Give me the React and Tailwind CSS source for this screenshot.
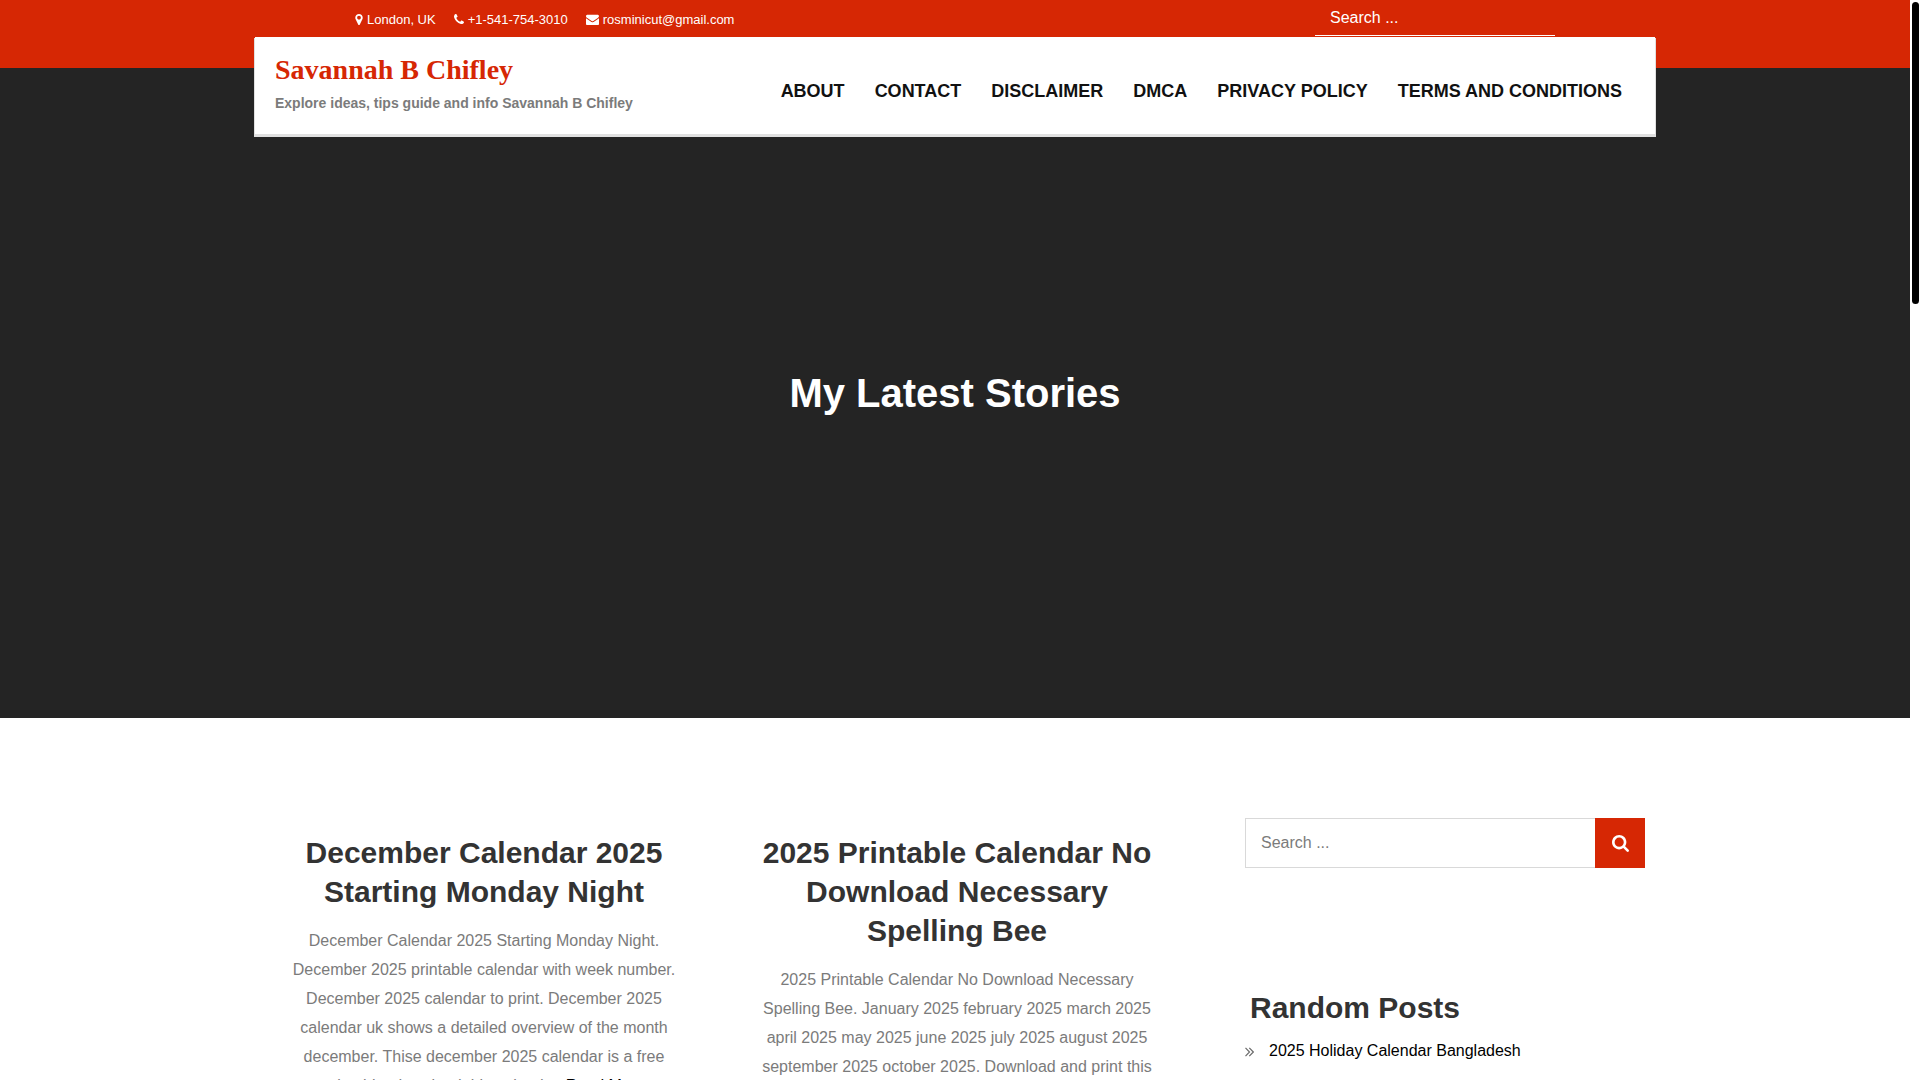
const navLinks = ['About', 'Contact', 'Disclaimer', 'DMCA', 'Privacy Policy', 'Terms and Conditions']

const contacts = [
  {
    label: 'London, UK',
    viewBox: '384 0 1024 1792',
    size: 'w-2',
    path: 'M1152 640q0-106-75-181t-181-75-181 75-75 181 75 181 181 75 181-75 75-181zm256 0q0 109-33 179l-364 774q-16 33-47.5 52t-67.5 19-67.5-19-46.5-52l-365-774q-33-70-33-179 0-212 150-362t362-150 362 150 150 362z',
  },
  {
    label: '+1-541-754-3010',
    href: 'tel:+15417543010',
    viewBox: '192 0 1408 1792',
    size: 'w-[10px]',
    path: 'M1600 1240q0 27-10 70.5t-21 68.5q-21 50-122 106-94 51-186 51-27 0-53-3.5t-57.5-12.5-47-14.5-55.5-20.5-49-18q-98-35-175-83-127-79-264-216t-216-264q-48-77-83-175-3-9-18-49t-20.5-55.5-14.5-47-12.5-57.5-3.5-53q0-92 51-186 56-101 106-122 25-11 68.5-21t70.5-10q14 0 21 3 18 6 53 76 11 19 30 54t35 63.5 31 53.5q3 4 17.5 25t21.5 35.5 7 28.5q0 20-28.5 50t-62 55-62 53-28.5 46q0 9 5 22.5t8.5 20.5 14 24 11.5 19q76 137 174 235t235 174q2 1 19 11.5t24 14 20.5 8.5 22.5 5q18 0 46-28.5t53-62 55-62 50-28.5q14 0 28.5 7t35.5 21.5 25 17.5q25 15 53.5 31t63.5 35 54 30q70 35 76 53 3 7 3 21z',
  },
  {
    label: 'rosminicut@gmail.com',
    href: 'mailto:rosminicut@gmail.com',
    viewBox: '0 0 1792 1792',
    size: 'w-[13px]',
    path: 'M1792 710v794q0 66-47 113t-113 47h-1472q-66 0-113-47t-47-113v-794q44 49 101 87 362 246 497 345 57 42 92.5 65.5t94.5 48 110 24.5h2q51 0 110-24.5t94.5-48 92.5-65.5q170-123 498-345 57-39 100-87zm0-294q0 79-49 151t-122 123q-376 261-468 325-10 7-42.5 31t-54 38.5-52 32.5-57.5 27-50 9h-2q-23 0-50-9t-57.5-27-52-32.5-54-38.5-42.5-31q-91-64-262-182.5t-205-142.5q-62-42-117-115.5t-55-136.5q0-78 41.5-130t118.5-52h1472q65 0 112.5 47t47.5 113z',
  },
]

const posts = [
  {
    title: 'December Calendar 2025 Starting Monday Night',
    excerpt:
      'December Calendar 2025 Starting Monday Night. December 2025 printable calendar with week number. December 2025 calendar to print. December 2025 calendar uk shows a detailed overview of the month december. Thise december 2025 calendar is a free printable, downloadable calendar.',
  },
  {
    title: '2025 Printable Calendar No Download Necessary Spelling Bee',
    excerpt:
      '2025 Printable Calendar No Download Necessary Spelling Bee. January 2025 february 2025 march 2025 april 2025 may 2025 june 2025 july 2025 august 2025 september 2025 october 2025. Download and print this',
  },
]

function Contact({ item }) {
  const content = (
    <>
      <svg viewBox={item.viewBox} className={`${item.size} h-[13px] -mt-px fill-current`} aria-hidden="true">
        <path d={item.path} />
      </svg>
      {item.label}
    </>
  )

  return (
    <li>
      {item.href ? (
        <a href={item.href} className="flex items-center gap-1">{content}</a>
      ) : (
        <span className="flex items-center gap-1">{content}</span>
      )}
    </li>
  )
}

function Header() {
  return (
    <header>
      <div className="h-[68px] bg-[#d62704] text-white">
        <div className="max-w-[1200px] mx-auto flex items-start justify-between">
          <ul className="flex gap-[18px] pt-[10px] text-[13px] leading-5">
            {contacts.map((item) => (
              <Contact key={item.label} item={item} />
            ))}
          </ul>
          <form role="search">
            <input
              type="search"
              aria-label="Search the site"
              placeholder="Search ..."
              className="block w-60 h-9 px-[15px] bg-transparent border-b border-white text-base placeholder:text-white outline-none"
            />
          </form>
        </div>
      </div>

      <div className="relative z-10 max-w-[1400px] -mt-[31px] mx-auto h-[97px] px-5 flex justify-between bg-white shadow-[0_2px_0_1px_#e0e0e0]">
        <div className="pt-4">
          <a href="#" className="block font-['Liberation_Serif',serif] text-[28px] leading-[34px] font-bold text-[#d62704]">
            Savannah B Chifley
          </a>
          <p className="text-sm leading-8 font-bold text-[#7b7b7b]">
            Explore ideas, tips guide and info Savannah B Chifley
          </p>
        </div>
        <nav className="flex items-center pt-[10px] pr-[13px]">
          <ul className="flex gap-[30px] text-lg font-bold uppercase text-[#111]">
            {navLinks.map((link) => (
              <li key={link}>
                <a href="#">{link}</a>
              </li>
            ))}
          </ul>
        </nav>
      </div>
    </header>
  )
}

function PostCard({ post, readMore }) {
  return (
    <article className="flex-1 px-[29px] text-center">
      <h2 className="text-3xl leading-[39px] font-bold text-[#333]">
        <a href="#">{post.title}</a>
      </h2>
      <p className="mt-[15px] leading-[29px] text-[#7b7b7b]">
        {post.excerpt}{' '}
        {readMore && <a href="#" className="text-black">Read More</a>}
      </p>
    </article>
  )
}

function Sidebar() {
  return (
    <aside className="w-[400px] shrink-0">
      <form role="search" className="flex h-[50px]">
        <input
          type="search"
          aria-label="Search posts"
          placeholder="Search ..."
          className="flex-1 min-w-0 px-[15px] border border-r-0 border-[#d9d9d9] text-base placeholder:text-[#7b7b7b] outline-none"
        />
        <button type="submit" aria-label="Search" className="w-[50px] pt-px flex items-center justify-center bg-[#d62704] text-white">
          <svg viewBox="64 128 1664 1664" className="size-[17px] fill-current" aria-hidden="true">
            <path d="M1216 832q0-185-131.5-316.5t-316.5-131.5-316.5 131.5-131.5 316.5 131.5 316.5 316.5 131.5 316.5-131.5 131.5-316.5zm512 832q0 52-38 90t-90 38q-54 0-90-38l-343-342q-179 124-399 124-143 0-273.5-55.5t-225-150-150-225-55.5-273.5 55.5-273.5 150-225 225-150 273.5-55.5 273.5 55.5 225 150 150 225 55.5 273.5q0 220-124 399l343 343q37 37 37 90z" />
          </svg>
        </button>
      </form>

      <section className="mt-[120px]">
        <h2 className="pl-[5px] text-3xl leading-[39px] font-bold text-[#333]">Random Posts</h2>
        <ul className="mt-[9px] leading-[29px]">
          <li className="flex items-center gap-[15px]">
            <svg viewBox="0 0 9 10" className="w-[9px] h-[10px] mt-[2px] fill-none stroke-[#6b6b6b]" aria-hidden="true">
              <path strokeWidth="1.2" d="M0.5 0.8L4.5 5L0.5 9.2M4.3 0.8L8.3 5L4.3 9.2" />
            </svg>
            <a href="#" className="text-black">2025 Holiday Calendar Bangladesh</a>
          </li>
        </ul>
      </section>
    </aside>
  )
}

export default function App() {
  return (
    <div className="flex h-screen overflow-hidden bg-white font-['Liberation_Sans',Arial,sans-serif]">
      <div className="flex-1 min-w-0 overflow-hidden">
        <Header />

        <section className="-mt-[66px] h-[650px] flex items-center justify-center bg-[#242424]">
          <h1 className="text-[40px] leading-[52px] font-bold text-white">My Latest Stories</h1>
        </section>

        <div className="max-w-[1400px] mx-auto pt-[100px] pr-[10px] flex gap-[59px]">
          <main className="flex-1 min-w-0 pt-[15px] flex gap-[15px]">
            {posts.map((post, i) => (
              <PostCard key={post.title} post={post} readMore={i === 0} />
            ))}
          </main>
          <Sidebar />
        </div>
      </div>

      {/* scroll track */}
      <div className="w-[10px] shrink-0 pt-[2px] pl-[2px] bg-white" aria-hidden="true">
        <div className="w-[7px] h-[28%] rounded-full bg-black" />
      </div>
    </div>
  )
}
